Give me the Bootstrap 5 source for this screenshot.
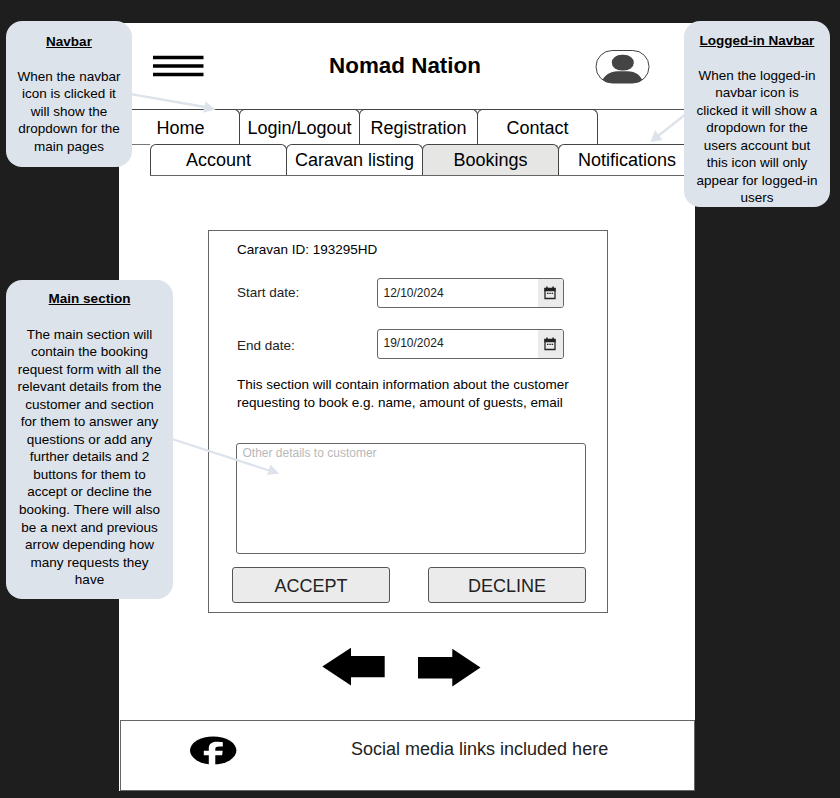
<!DOCTYPE html>
<html lang="en">
<head>
<meta charset="utf-8">
<meta name="viewport" content="width=device-width, initial-scale=1">
<title>Nomad Nation</title>
<link href="https://cdn.jsdelivr.net/npm/bootstrap@5.3.0/dist/css/bootstrap.min.css" rel="stylesheet">
<style>
  body { background: #1e1e1e; font-family: "Liberation Sans", Arial, sans-serif; color: #000; font-size: 13.5px; line-height: 17.6px; width: 840px; height: 798px; overflow: hidden; }
  .sheet { width: 576px; height: 768px; margin: 23px 0 0 119px; background: #fff; }
  .site-head { height: 86px; padding: 0 44px 0 34px; }
  .site-title { font-size: 22.4px; font-weight: 700; line-height: 26px; margin-left: 11px; }
  .burger { width: 51px; height: 22px; display: block; margin-bottom: 1px; padding: 0; }
  .tabs { height: 36px; border-top: 1px solid #555; border-bottom: 1px solid #777; font-size: 18px; }
  .tabs .tab-item { margin: -1px 0 0 -1px; height: 35px; border: 1px solid #444; border-bottom: 0; border-radius: 6px 6px 0 0; color: #000; text-decoration: none; display: flex; align-items: center; justify-content: center; white-space: nowrap; flex: none; padding-top: 3px; }
  .tabs .w-a { width: 122px; padding-left: 3px; } .tabs .w-b { width: 121px; } .tabs .w-c { width: 119px; } .tabs .w-d { width: 121px; }
  .subtabs { height: 32px; margin: -1px 0 0 31px; border: 0; border-bottom: 1px solid #666; position: relative; background: #fff; }
  .subtabs .tab-item { margin-top: 0; height: 31px; width: 137px; padding-top: 1px; }
  .subtabs .tab-item.first { margin-left: 0; }
  .subtabs .tab-item.last { border-right: 0; border-top-right-radius: 0; width: 138px; padding-right: 1px; }
  .subtabs .current { background: #e6e6e4; }
  .request { width: 400px; height: 383px; margin: 54px 0 0 89px; border: 1px solid #666; padding: 10px 21px 0 28px; }
  .field-row { height: 30px; margin-top: 19px; color: #222; }
  .field-row + .field-row { margin-top: 21px; }
  .field-row .lbl { width: 140px; }
  .date-box { width: 187px; height: 30px; border: 1px solid #666; border-radius: 3px; font-size: 12px; background: #fff; overflow: hidden; }
  .date-box .val { padding-left: 5.5px; padding-top: 2px; }
  .date-box .val.up { padding: 0 0 0 5.5px; }
  .date-box .cal { width: 25px; height: 28px; background: #ebebeb; padding-right: 2px; }
  .guest-info { margin-top: 17px; line-height: 18px; }
  .note-area { height: 111px; width: 350px; margin: 31px 0 0 -1px; border: 1px solid #666; border-radius: 3px; font-size: 12px; line-height: 14px; padding: 2px 5.5px; color: #b8b8b8; }
  .actions { margin: 13px 0 0 -5px; width: 354px; }
  .action { width: 158px; height: 36px; border: 1px solid #555; border-radius: 3px; background: #ebebeb; font-size: 18px; color: #222; padding: 3px 0 0; line-height: 20px; }
  .pager { margin: 34px 0 0 203px; gap: 32px; }
  .site-foot { height: 71px; width: 575px; margin-left: 1px; border: 1px solid #666; font-size: 18px; color: #222; padding: 0 0 11px 69px; }
  .site-foot .social-text { margin-left: 114px; }
  .callout { position: absolute; background: #dde3eb; border-radius: 16px; text-align: center; white-space: nowrap; line-height: 17.55px; }
  .callout h2 { font-size: 13.5px; font-weight: 700; text-decoration: underline; line-height: 17.55px; margin: 0 0 17px; }
  .c-nav { left: 6px; top: 21px; width: 126px; height: 146px; padding-top: 12px; }
  .c-user { left: 684px; top: 21px; width: 146px; height: 186px; padding-top: 11px; }
  .c-main { left: 6px; top: 280px; width: 167px; height: 319px; padding-top: 10px; }
  .c-main h2 { margin-bottom: 18px; }
  .pointers { position: absolute; left: 0; top: 0; pointer-events: none; }
</style>
</head>
<body class="position-relative">
<main class="sheet d-flex flex-column">
  <header class="site-head d-flex align-items-center justify-content-between">
    <button class="burger border-0 bg-transparent" type="button" aria-label="Menu">
      <svg class="d-block" width="51" height="22"><path d="M0 2.500h50.500M0 11h50.500M0 19.500h50.500" stroke="#000" stroke-width="3.400"/></svg>
    </button>
    <div class="site-title">Nomad Nation</div>
    <svg width="56" height="36" viewBox="0 0 56 36" aria-label="Account">
      <defs><clipPath id="pill"><rect x="1" y="2.500" width="53" height="32.500" rx="16.200"/></clipPath></defs>
      <g clip-path="url(#pill)" fill="#444"><rect x="16.800" y="6.800" width="22" height="15.700" rx="10" ry="7.850"/><path d="M6.500 35.500c1-8 9-12.200 16-12.200h10c8 0 14.500 4.200 15.500 12.200z"/></g>
      <rect x="1" y="2.500" width="53" height="32.500" rx="16.200" fill="none" stroke="#444"/>
    </svg>
  </header>
  <nav class="tabs d-flex">
    <a class="tab-item w-a" href="#">Home</a><a class="tab-item w-b" href="#">Login/Logout</a><a class="tab-item w-c" href="#">Registration</a><a class="tab-item w-d" href="#">Contact</a>
  </nav>
  <nav class="tabs subtabs d-flex">
    <a class="tab-item first" href="#">Account</a><a class="tab-item" href="#">Caravan listing</a><a class="tab-item current" href="#">Bookings</a><a class="tab-item last" href="#">Notifications</a>
  </nav>
  <section class="request flex-shrink-0">
    <div>Caravan ID: 193295HD</div>
    <div class="field-row d-flex align-items-center">
      <div class="lbl">Start date:</div>
      <div class="date-box d-flex align-items-center justify-content-between"><span class="val">12/10/2024</span>
        <span class="cal d-flex align-items-center justify-content-center"><svg width="12" height="14" viewBox="0 0 12 14"><path d="M1 2.500h10v10H1z" fill="none" stroke="#222" stroke-width="1.300"/><path d="M.4 2h11.200v3.200H.4zM2.200.5h1.500v2H2.200zM8.300.5h1.500v2H8.300z" fill="#222"/><path d="M3 7.300h6.500" stroke="#222" stroke-width="1.200" stroke-dasharray="1.500 .8"/></svg></span></div>
    </div>
    <div class="field-row d-flex align-items-center">
      <div class="lbl pt-1">End date:</div>
      <div class="date-box d-flex align-items-center justify-content-between"><span class="val up">19/10/2024</span>
        <span class="cal d-flex align-items-center justify-content-center"><svg width="12" height="14" viewBox="0 0 12 14"><path d="M1 2.500h10v10H1z" fill="none" stroke="#222" stroke-width="1.300"/><path d="M.4 2h11.200v3.200H.4zM2.200.5h1.500v2H2.200zM8.300.5h1.500v2H8.300z" fill="#222"/><path d="M3 7.300h6.500" stroke="#222" stroke-width="1.200" stroke-dasharray="1.500 .8"/></svg></span></div>
    </div>
    <div class="guest-info text-nowrap">This section will contain information about the customer<br>requesting to book e.g. name, amount of guests, email</div>
    <div class="note-area">Other details to customer</div>
    <div class="actions d-flex justify-content-between">
      <button class="action" type="button">ACCEPT</button><button class="action" type="button">DECLINE</button>
    </div>
  </section>
  <div class="pager d-flex">
    <svg width="64" height="41" viewBox="322 647 64 41" aria-label="Previous"><path d="M322.300 666.500 351 647.800V656h33.700v21.300H351v8.200z"/></svg>
    <svg width="64" height="41" viewBox="418 647 64 41" aria-label="Next"><path d="M480.500 667.500 452.300 648.800V657H418v21.500h34.300v8z"/></svg>
  </div>
  <footer class="site-foot d-flex align-items-center mt-auto flex-shrink-0">
    <svg width="47" height="29" viewBox="0 0 47 29" aria-label="Facebook"><ellipse cx="23.200" cy="14.500" rx="23.200" ry="14"/><path d="M18.800 29V19.200h-5v-4.400h5v-2.600c0-4.200 3-6.400 7.700-6.400 2.500 0 4.400.2 6.300.5v4.100h-3.300c-3 0-4.200.8-4.200 2.300v2.100h7.400l-.6 4.400h-6.800V29z" fill="#fff"/></svg>
    <span class="social-text text-nowrap">Social media links included here</span>
  </footer>
</main>
<svg class="pointers" width="840" height="798">
  <g stroke="#dde3eb" stroke-width="2.300"><path d="M131 94.200 205 107M686 114 658 136M172 439 269 470.500"/></g>
  <path fill="#dde3eb" d="M205.500 101.500 215.500 109.500 203 112.700zM650.500 142 655 130 662.500 140zM270.500 464.500 279 473.500 267 475z"/>
</svg>
<aside class="callout c-nav"><h2>Navbar</h2>When the navbar<br>icon is clicked it<br>will show the<br>dropdown for the<br>main pages</aside>
<aside class="callout c-user"><h2>Logged-in Navbar</h2>When the logged-in<br>navbar icon is<br>clicked it will show a<br>dropdown for the<br>users account but<br>this icon will only<br>appear for logged-in<br>users</aside>
<aside class="callout c-main"><h2>Main section</h2>The main section will<br>contain the booking<br>request form with all the<br>relevant details from the<br>customer and section<br>for them to answer any<br>questions or add any<br>further details and 2<br>buttons for them to<br>accept or decline the<br>booking. There will also<br>be a next and previous<br>arrow depending how<br>many requests they<br>have</aside>
<script src="https://cdn.jsdelivr.net/npm/bootstrap@5.3.0/dist/js/bootstrap.bundle.min.js"></script>
</body>
</html>
